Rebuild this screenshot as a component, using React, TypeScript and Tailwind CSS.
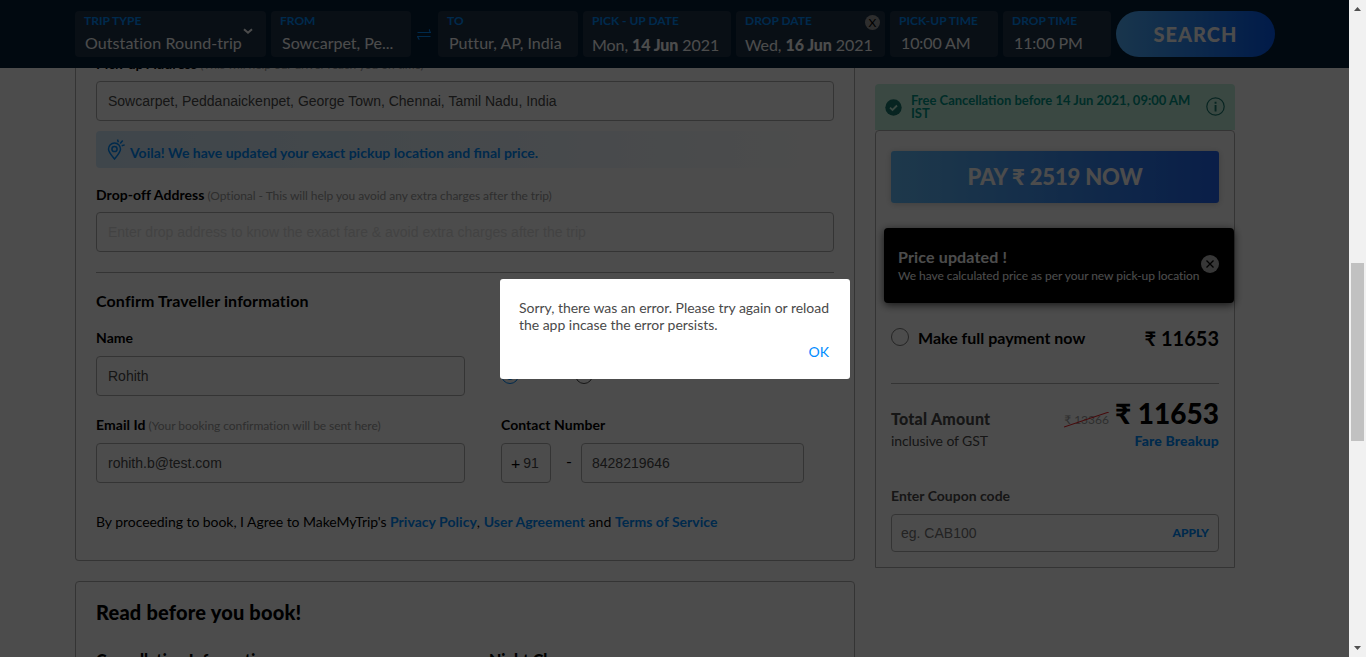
import type { ReactNode } from "react";

const inputBox =
  "flex h-10 items-center rounded border border-[#b0b0b0] px-[11px] font-['Liberation_Sans',Arial,sans-serif] text-sm text-[#4a4a4a]";

function SearchField({
  label,
  width,
  children,
}: {
  label: string;
  width: string;
  children: ReactNode;
}) {
  return (
    <div className={`relative mr-[5px] h-[46px] shrink-0 rounded bg-[#1e3348] pl-[9px] ${width}`}>
      <div className="h-5 text-xs leading-5 font-bold whitespace-nowrap text-[#008cff]">{label}</div>
      {children}
    </div>
  );
}

function Header() {
  return (
    <header className="relative z-10 flex h-[68px] bg-[#051f36] pt-[11px] pl-[75px] text-base text-white">
      <SearchField label="TRIP TYPE" width="w-[191px]">
        <div className="pl-[1px] leading-6 tracking-[0.08px]">Outstation Round-trip</div>
        <svg className="absolute top-[17px] right-[13px]" width="10" height="7" viewBox="0 0 10 7" fill="none">
          <path d="M1 1.2L5 4.7L9 1.2" stroke="white" strokeWidth="2" />
        </svg>
      </SearchField>
      <SearchField label="FROM" width="w-[140px]">
        <div className="pl-[2px] leading-6">Sowcarpet, Pe...</div>
      </SearchField>
      <div className="flex w-[22px] shrink-0 items-center pb-[11px] pl-[1px]">
        <svg width="14" height="13" viewBox="0 0 14 13" fill="none" stroke="#008cff" strokeWidth="1.100">
          <path d="M.5 4.500H13.500C12.500 3.500 12.800 2 12 1.500M13.500 8.500H.5C1.500 9.500 1.200 11 2.500 11.500" />
        </svg>
      </div>
      <SearchField label="TO" width="w-[140px]">
        <div className="pl-[2px] leading-6 tracking-[0.05px]">Puttur, AP, India</div>
      </SearchField>
      <SearchField label="PICK - UP DATE" width="w-[148px]">
        <div className="leading-7 tracking-[-0.07px]">
          Mon, <span className="font-black">14 Jun</span> 2021
        </div>
      </SearchField>
      <SearchField label="DROP DATE" width="w-[149px]">
        <div className="leading-7 tracking-[-0.07px]">
          Wed, <span className="font-black">16 Jun</span> 2021
        </div>
        <span className="absolute top-1 right-[5px] flex size-[15px] items-center justify-center rounded-full bg-[#9b9b9b] text-xs text-black">
          X
        </span>
      </SearchField>
      <SearchField label="PICK-UP TIME" width="w-[108px]">
        <div className="pl-[2px] leading-6 tracking-[-0.1px]">10:00 AM</div>
      </SearchField>
      <SearchField label="DROP TIME" width="w-[108px]">
        <div className="pl-[2px] leading-6 tracking-[-0.1px]">11:00 PM</div>
      </SearchField>
      <button className="h-[46px] w-[159px] shrink-0 rounded-full bg-linear-to-r from-[#53b2fe] to-[#065af3] text-xl font-black tracking-[1px]">
        SEARCH
      </button>
    </header>
  );
}

function Label({ children, hint }: { children: ReactNode; hint?: string }) {
  return (
    <div className="h-[17px] text-sm leading-[17px] font-bold tracking-[0.05px] whitespace-nowrap text-black">
      {children}
      {hint && <span className="text-xs leading-3 font-normal tracking-[-0.05px] text-[#9b9b9b]"> {hint}</span>}
    </div>
  );
}

function PinIcon() {
  return (
    <svg width="18" height="21" viewBox="0 0 18 21" fill="none" stroke="#008cff" strokeWidth="1.500">
      <path d="M7.500 20C4.800 16.700 1.500 13.200 1.500 10A6 6 0 0 1 13.500 10C13.500 13.200 10.200 16.700 7.500 20Z" />
      <circle cx="7.500" cy="10" r="2.600" />
      <path d="M10.500 .5L11.300 3.200M15.700 1.500L13.200 4.500M14.700 6.700L17.700 5.900" />
    </svg>
  );
}

function TravellerCard() {
  return (
    <section className="-mt-[13px] h-[506px] rounded-b border border-t-0 border-[#b0b0b0] px-5">
      <Label hint="(This will help our driver reach you on time)">Pick-up Address</Label>
      <div className={`mt-[9px] ${inputBox}`}>Sowcarpet, Peddanaickenpet, George Town, Chennai, Tamil Nadu, India</div>
      <div className="mt-[10px] flex h-[37px] rounded bg-linear-to-r from-[#d3eafa] to-white pt-2 pl-[11px]">
        <PinIcon />
        <span className="pt-[5px] pl-[5px] text-sm leading-[18px] font-bold text-[#008cff]">
          Voila! We have updated your exact pickup location and final price.
        </span>
      </div>
      <div className="mt-[18px]">
        <Label hint="(Optional - This will help you avoid any extra charges after the trip)">Drop-off Address</Label>
      </div>
      <div className={`mt-[9px] ${inputBox}`}>
        <span className="text-[#dedede]">Enter drop address to know the exact fare &amp; avoid extra charges after the trip</span>
      </div>
      <hr className="mt-5 border-[#b0b0b0]" />
      <h2 className="mt-[18px] h-5 text-base leading-5 font-bold tracking-[0.13px]">Confirm Traveller information</h2>
      <div className="mt-[18px] flex gap-9">
        <div className="w-[369px]">
          <Label>Name</Label>
          <div className={`mt-[10px] ${inputBox}`}>Rohith</div>
        </div>
        <div className="flex gap-14 pt-[37px]">
          <span className="flex size-[18px] items-center justify-center rounded-full border border-[#008cff]">
            <span className="size-[10px] rounded-full bg-[#008cff]" />
          </span>
          <span className="size-[18px] rounded-full border border-[#4a4a4a]" />
        </div>
      </div>
      <div className="mt-5 flex gap-9">
        <div className="w-[369px]">
          <Label hint="(Your booking confirmation will be sent here)">Email Id</Label>
          <div className={`mt-[10px] ${inputBox}`}>rohith.b@test.com</div>
        </div>
        <div>
          <Label>Contact Number</Label>
          <div className="mt-[10px] flex">
            <div className="flex h-10 w-[50px] items-center gap-[3px] rounded border border-[#b0b0b0] pl-[9px] text-sm">
              <span className="text-base">+</span>
              <span className="font-['Liberation_Sans',Arial,sans-serif] text-[#4a4a4a]">91</span>
            </div>
            <span className="w-[30px] pt-[6px] pl-[6px] text-center text-base">-</span>
            <div className="flex h-10 w-[223px] items-center rounded border border-[#b0b0b0] px-[10px] font-['Liberation_Sans',Arial,sans-serif] text-sm text-[#4a4a4a]">
              8428219646
            </div>
          </div>
        </div>
      </div>
      <p className="mt-[30px] text-sm leading-[18px]">
        <span className="tracking-[-0.05px]">By proceeding to book, I Agree to MakeMyTrip's </span>
        <span className="tracking-[0.03px]">
          <b className="text-[#008cff]">Privacy Policy</b>, <b className="text-[#008cff]">User Agreement</b> and{" "}
          <b className="text-[#008cff]">Terms of Service</b>
        </span>
      </p>
    </section>
  );
}

function ReadCard() {
  return (
    <section className="mt-5 h-[120px] rounded border border-[#b0b0b0] px-5 pt-[18px]">
      <h2 className="text-xl leading-[25px] font-black tracking-[0.2px]">Read before you book!</h2>
      <div className="mt-[25px] flex text-base leading-5 font-black">
        <span className="w-[393px]">Cancellation Information</span>
        <span>Night Charges</span>
      </div>
    </section>
  );
}

function Sidebar() {
  return (
    <aside className="w-[360px] pt-4">
      <div className="flex h-[46px] items-center rounded-t bg-[#c3f2dc] pr-[10px] pl-[10px]">
        <svg width="17" height="17" viewBox="0 0 17 17">
          <circle cx="8.500" cy="8.500" r="8.200" fill="#1a7971" />
          <path d="M5 8.700L7.500 11L12 6.500" fill="none" stroke="#c3f2dc" strokeWidth="1.800" />
        </svg>
        <span className="ml-[9px] w-[285px] text-[13px] leading-[13px] font-bold text-[#009688]">
          Free Cancellation before 14 Jun 2021, 09:00 AM IST
        </span>
        <svg className="-mt-px ml-auto shrink-0" width="19" height="19" viewBox="0 0 19 19">
          <circle cx="9.500" cy="9.500" r="8.700" fill="none" stroke="#1a7971" strokeWidth="1.200" />
          <path d="M8.600 4.800h1.900v1.900H8.600zM8.600 8h1.900v6.500H8.600z" fill="#1a7971" />
        </svg>
      </div>
      <div className="h-[438px] rounded-t border border-[#b0b0b0] px-[15px] pt-5">
        <button className="h-[52px] w-full rounded-[3px] bg-linear-to-r from-[#65bdfa] to-[#2265f0] pb-[2px] text-[22px] font-black tracking-[-0.15px] text-white shadow-[0_1px_7px_0_rgba(0,0,0,0.2)]">
          PAY ₹ 2519 NOW
        </button>
        <div className="mt-[25px] -mr-[15px] -ml-[7px] flex h-[75px] rounded bg-black pt-[19px] pr-[15px] pl-[14px] text-white shadow-[0_2px_9px_rgba(0,0,0,0.7)]">
          <div className="w-[303px] whitespace-nowrap">
            <div className="text-base leading-5 font-bold tracking-[0.15px]">Price updated !</div>
            <div className="text-xs leading-[17px] tracking-[-0.05px]">
              We have calculated price as per your new pick-up location
            </div>
          </div>
          <svg className="mt-2" width="18" height="18" viewBox="0 0 18 18">
            <circle cx="9" cy="9" r="9" fill="#b8b8b8" />
            <path d="M5.500 5.500l7 7M12.500 5.500l-7 7" stroke="black" strokeWidth="1.300" />
          </svg>
        </div>
        <div className="mt-[22px] flex h-[26px] items-center">
          <span className="mb-[3px] size-[18px] rounded-full border border-[#7a7a7a]" />
          <span className="ml-[9px] text-base font-bold">Make full payment now</span>
          <span className="ml-auto text-xl font-bold">₹ 11653</span>
        </div>
        <hr className="mt-8 border-[#b0b0b0]" />
        <div className="mt-[11px] flex h-9 items-end whitespace-nowrap">
          <span className="pb-[2px] text-base leading-5 font-black tracking-[0.25px] text-[#4a4a4a]">Total Amount</span>
          <span className="relative mr-[6px] mb-[3px] ml-auto text-xs leading-4 text-[#9b9b9b]">
            ₹ 13366
            <svg className="absolute inset-0 size-full" viewBox="0 0 44 16" preserveAspectRatio="none">
              <path d="M0 15L44 0" stroke="#eb2026" strokeWidth="1" />
            </svg>
          </span>
          <span className="text-[28px] leading-9 font-black">₹ 11653</span>
        </div>
        <div className="mt-px flex h-[18px] items-center justify-between text-sm">
          <span className="tracking-[-0.1px] text-[#4a4a4a]">inclusive of GST</span>
          <span className="font-black tracking-[0.15px] text-[#008cff]">Fare Breakup</span>
        </div>
        <div className="mt-[37px] text-sm leading-[18px] font-bold text-[#4a4a4a]">Enter Coupon code</div>
        <div className="mt-[9px] flex h-[38px] items-center justify-between rounded border border-[#b0b0b0] px-[9px]">
          <span className="font-['Liberation_Sans',Arial,sans-serif] text-sm text-[#757575]">eg. CAB100</span>
          <span className="text-xs font-black text-[#008cff]">APPLY</span>
        </div>
      </div>
    </aside>
  );
}

function ScrollBar() {
  return (
    <div className="flex w-[17px] shrink-0 flex-col items-center bg-[#f1f1f1]">
      <svg className="mt-[7px] shrink-0" width="7" height="4" viewBox="0 0 7 4">
        <path d="M0 4L3.500 0L7 4Z" fill="#505050" />
      </svg>
      <div className="mt-[252px] h-[178px] w-[13px] bg-[#c1c1c1]" />
      <svg className="mt-auto mb-[7px] shrink-0" width="7" height="4" viewBox="0 0 7 4">
        <path d="M0 0L3.500 4L7 0Z" fill="#505050" />
      </svg>
    </div>
  );
}

function ErrorDialog() {
  return (
    <div className="absolute inset-0 z-20 bg-black/70">
      <div className="absolute top-[279px] left-[500px] h-[100px] w-[350px] rounded-[3px] bg-white px-[19px] pt-5 text-sm leading-[17px] text-[#4a4a4a]">
        <p className="tracking-[-0.03px] whitespace-nowrap">
          Sorry, there was an error. Please try again or reload
          <br />
          the app incase the error persists.
        </p>
        <div className="mt-[10px] pr-[2px] text-right text-[#008cff]">OK</div>
      </div>
    </div>
  );
}

export default function App() {
  return (
    <div className="flex h-[657px] w-[1366px] overflow-hidden font-[Lato,sans-serif] text-black">
      <div className="relative h-[657px] w-[1349px] overflow-hidden bg-white">
        <Header />
        <main className="flex h-[589px] gap-5 pl-[75px]">
          <div className="w-[780px]">
            <TravellerCard />
            <ReadCard />
          </div>
          <Sidebar />
        </main>
        <ErrorDialog />
      </div>
      <ScrollBar />
    </div>
  );
}
